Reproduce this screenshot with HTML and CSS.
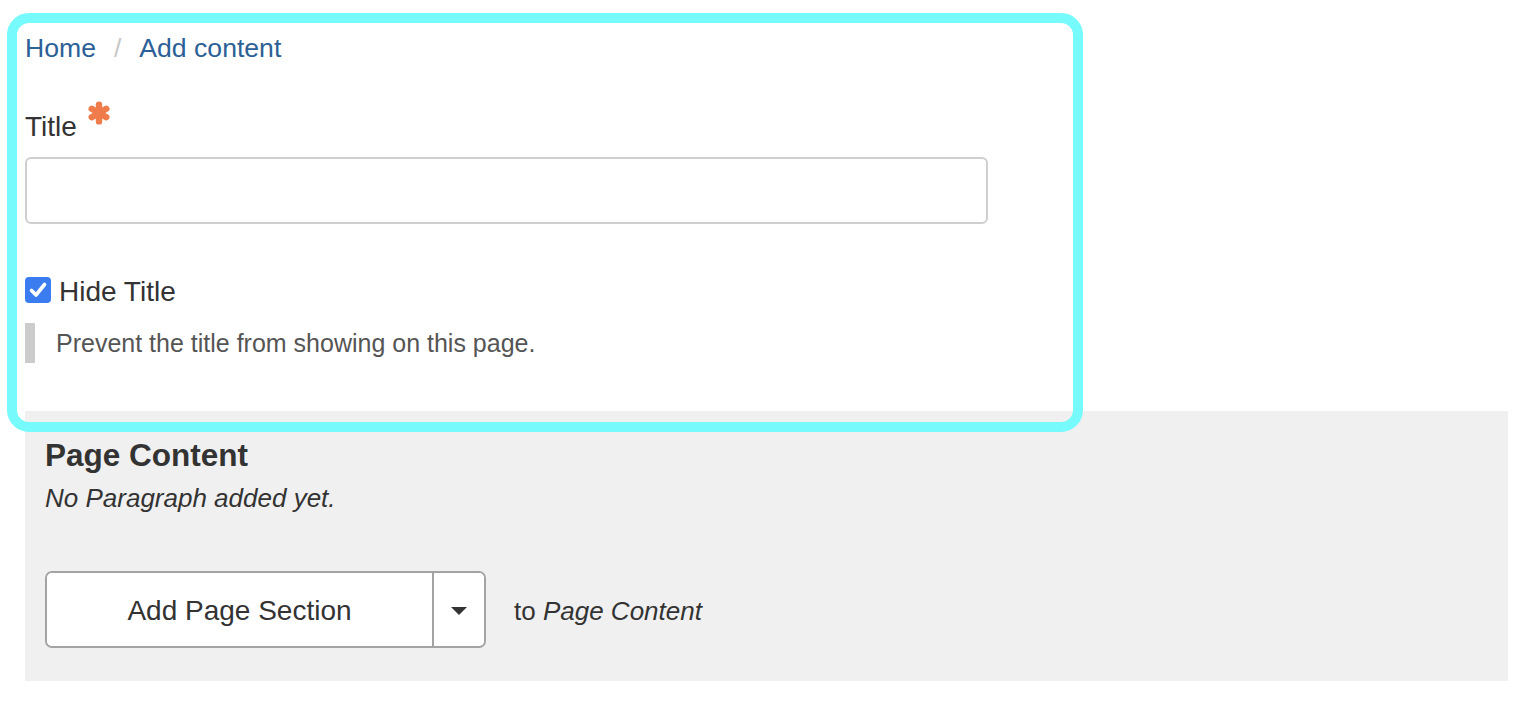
FILE: index.html
```html
<!DOCTYPE html>
<html lang="en">
<head>
<meta charset="utf-8">
<title>Add content</title>
<link rel="stylesheet" href="styles.css">
</head>
<body>
<div class="page">
  <nav class="breadcrumb">
    <a href="#" class="crumb">Home</a><span class="sep">/</span><a href="#" class="crumb">Add content</a>
  </nav>

  <div class="field title-field">
    <label class="field-label">Title<span class="req"><svg width="24" height="24" viewBox="0 0 24 24"><g stroke="#f07b4b" stroke-width="6.4" stroke-linecap="round"><line x1="12" y1="3.6" x2="12" y2="20.4"/><line x1="4.72" y1="7.8" x2="19.28" y2="16.2"/><line x1="4.72" y1="16.2" x2="19.28" y2="7.8"/></g></svg></span></label>
    <input class="text-input" type="text">
  </div>

  <div class="field check-field">
    <label class="check-label"><span class="checkbox"><svg width="26" height="26" viewBox="0 0 26 26"><path d="M6.5 13.5 L11 18 L19.5 7.5" fill="none" stroke="#fff" stroke-width="3.6" stroke-linecap="round" stroke-linejoin="round"/></svg></span>Hide Title</label>
    <div class="description">Prevent the title from showing on this page.</div>
  </div>

  <section class="paragraphs">
    <h3 class="para-title">Page Content</h3>
    <p class="empty"><em>No Paragraph added yet.</em></p>
    <div class="add-row">
      <div class="btn-group">
        <button class="btn-main" type="button">Add Page Section</button>
        <button class="btn-toggle" type="button"><svg width="16" height="8" viewBox="0 0 16 8"><path d="M0 0 H16 L8 8 Z" fill="#333"/></svg></button>
      </div>
      <span class="to">to <em>Page Content</em></span>
    </div>
  </section>

  <div class="highlight"></div>
</div>
</body>
</html>
```

FILE: styles.css
```css
html, body {
  margin: 0;
  padding: 0;
  background: #fff;
}

body {
  font-family: "Liberation Sans", Arial, Helvetica, sans-serif;
  color: #333;
}

.page {
  position: relative;
  padding: 32px 22px 0 25px;
}

.breadcrumb {
  display: flex;
  align-items: center;
  font-size: 26.6px;
  line-height: 32px;
  height: 32px;
}

.crumb {
  color: #2c6096;
  text-decoration: none;
}

.sep {
  color: #c8c8c8;
  margin: 0 18px 0 18px;
}

.title-field {
  margin-top: 46px;
}

.field-label {
  display: flex;
  align-items: flex-start;
  font-size: 28px;
  line-height: 34px;
  height: 34px;
}

.req {
  display: inline-flex;
  margin-left: 10px;
  margin-top: -9px;
}

.text-input {
  display: block;
  box-sizing: border-box;
  margin-top: 13px;
  width: 963px;
  height: 67px;
  border: 2px solid #cfcfcf;
  border-radius: 6px;
  background: #fff;
  font-size: 26px;
  padding: 0 12px;
  outline: none;
}

.check-field {
  margin-top: 51px;
}

.check-label {
  display: flex;
  align-items: center;
  font-size: 28px;
  line-height: 34px;
  height: 34px;
}

.checkbox {
  display: inline-flex;
  width: 26px;
  height: 26px;
  background: #3b7cf1;
  border-radius: 4px;
  margin-right: 8px;
  margin-top: -5px;
}

.description {
  margin-top: 14px;
  border-left: 10px solid #cccccc;
  padding-left: 21px;
  font-size: 25px;
  line-height: 40px;
  height: 40px;
  color: #555;
}

.paragraphs {
  margin-top: 48px;
  background: #f0f0f0;
  padding: 26px 20px 33px;
}

.para-title {
  margin: 0;
  font-size: 31.5px;
  line-height: 36px;
  font-weight: bold;
  color: #333;
}

.empty {
  margin: 10px 0 0;
  font-size: 26px;
  line-height: 30px;
  color: #333;
}

.add-row {
  display: flex;
  align-items: center;
  margin-top: 58px;
}

.btn-group {
  display: flex;
  height: 77px;
  box-sizing: border-box;
  border: 2px solid #a3a3a3;
  border-radius: 7px;
  background: #fff;
  overflow: hidden;
}

.btn-main,
.btn-toggle {
  border: 0;
  background: #fff;
  margin: 0;
  padding: 0;
  font-family: inherit;
  color: #333;
  display: flex;
  align-items: center;
  justify-content: center;
}

.btn-main {
  width: 387px;
  font-size: 28px;
  padding-top: 3px;
  border-right: 2px solid #a3a3a3;
}

.btn-toggle {
  width: 50px;
  padding-top: 2px;
}

.to {
  margin-left: 28px;
  padding-top: 3px;
  font-size: 26px;
  color: #333;
}

.highlight {
  position: absolute;
  left: 7px;
  top: 13px;
  width: 1076px;
  height: 419px;
  box-sizing: border-box;
  border: 10px solid #76fafc;
  border-radius: 22px;
  pointer-events: none;
}
```
